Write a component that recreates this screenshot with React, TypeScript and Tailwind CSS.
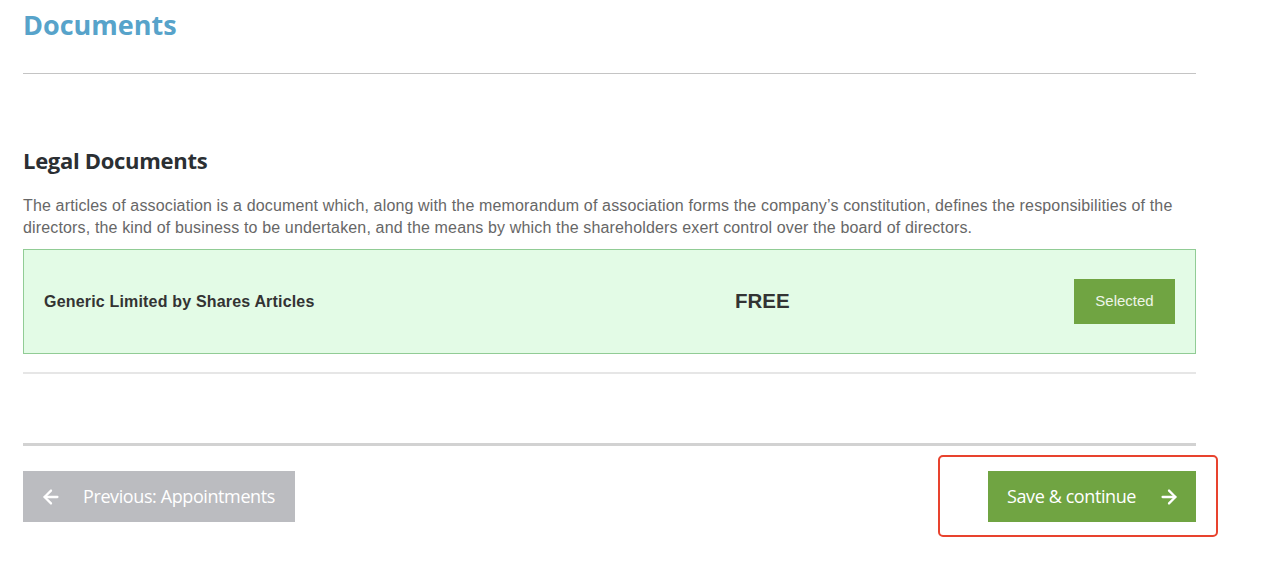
import { ArrowLeft, ArrowRight } from 'lucide-react';

// Documents step of the company formation wizard.
const humanist = "font-['Open_Sans',sans-serif]";
const arial = "font-['Liberation_Sans',Arial,sans-serif]";

export default function App() {
  return (
    <div className="relative min-h-[586px] w-[1265px] bg-white">
      <div className="w-[1173px] pl-[23px] box-content">
        <h1 className={`${humanist} pt-[7px] text-[27px] font-bold leading-[36px] tracking-[0px] text-[#57a3ca]`}>
          Documents
        </h1>
        <div className="mt-[30px] h-px bg-[#c4c4c4]" />

        <h2 className={`${humanist} mt-[71px] text-[22px] font-bold leading-[30px] tracking-[-0.3px] text-[#2b2f33]`}>
          Legal Documents
        </h2>
        <p className={`${arial} mt-[20px] text-[16px] leading-[22px] tracking-[0.15px] text-[#676767]`}>
          The articles of association is a document which, along with the memorandum of association forms the
          company&rsquo;s constitution, defines the responsibilities of the directors, the kind of business to be
          undertaken, and the means by which the shareholders exert control over the board of directors.
        </p>

        <div className="mt-[10px] flex h-[105px] items-center border border-[#91cc95] bg-[#e3fbe6] pl-[20px] pr-[20px]">
          <div className={`${arial} w-[691px] shrink-0 text-[16px] font-bold tracking-[0.18px] text-[#333]`}>
            Generic Limited by Shares Articles
          </div>
          <div className={`${arial} text-[20.5px] font-bold text-[#333]`}>FREE</div>
          <div className="flex flex-1 justify-end">
            <button className={`${arial} h-[45px] w-[101px] bg-[#70a442] text-[15px] text-[#eef5e8]`}>Selected</button>
          </div>
        </div>
        <div className="mt-[18px] h-[2px] bg-[#e6e6e6]" />

        <div className="mt-[69px] h-[3px] bg-[#d2d2d2]" />
        <div className="mt-[25px] flex items-center justify-between">
          <button className={`${humanist} flex h-[51px] w-[272px] items-center bg-[#bbbcc0] pl-[17px] text-[18px] tracking-[-0.4px] text-white`}>
            <ArrowLeft size={22} strokeWidth={2.5} />
            <span className="ml-[21px]">Previous: Appointments</span>
          </button>
          <button className={`${humanist} flex h-[51px] w-[208px] items-center bg-[#70a442] pl-[19px] text-[18px] tracking-[-0.4px] text-white`}>
            <span>Save &amp; continue</span>
            <ArrowRight size={22} strokeWidth={2.5} className="ml-[22px]" />
          </button>
        </div>
      </div>

      {/* red highlight drawn over the continue button */}
      <div className="absolute left-[938px] top-[455px] h-[82px] w-[280px] rounded-[5px] border-2 border-[#e8432e]" />
    </div>
  );
}
